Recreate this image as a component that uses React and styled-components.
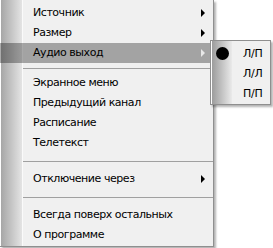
import React from "react";
import styled, { createGlobalStyle } from "styled-components";

const GlobalStyle = createGlobalStyle`
  body {
    margin: 0;
    background: #fff;
    font-family: "DejaVu Sans", Verdana, sans-serif;
  }
`;

const Page = styled.div`
  position: relative;
  width: 273px;
  height: 248px;
  overflow: hidden;
`;

const Menu = styled.div`
  width: 213px;
  padding: 3px 0 1px;
  background: linear-gradient(
    to right,
    #fdfdfd 0 1px,
    #a6a6a6 1px,
    #e4e4e4 22px,
    #fafafa 22px 23px,
    #f0f0f0 23px
  );
  border-right: 1px solid #8f8f8f;
  border-bottom: 1px solid #8f8f8f;
  box-shadow: 2px 2px 2px rgba(0, 0, 0, 0.3);
`;

const Item = styled.div`
  position: relative;
  height: 20px;
  line-height: 20px;
  padding-left: 33px;
  font-size: 11px;
  letter-spacing: -0.45px;
  color: #000;
  white-space: nowrap;
  background: ${(p) => (p.$active ? "rgba(0, 0, 0, 0.32)" : "transparent")};
`;

const Arrow = styled.span`
  position: absolute;
  right: 8px;
  top: 6px;
  width: 0;
  height: 0;
  border-left: 4px solid ${(p) => (p.$light ? "#e8e8e8" : "#000")};
  border-top: 4px solid transparent;
  border-bottom: 4px solid transparent;
`;

const Separator = styled.div`
  margin-left: 23px;
  height: ${(p) => (p.$tall ? 16 : 10)}px;
  display: flex;
  align-items: center;

  &::after {
    content: "";
    flex: 1;
    height: 1px;
    background: #a0a0a0;
  }
`;

const SubMenu = styled.div`
  position: absolute;
  left: 210px;
  top: 40px;
  width: 59px;
  padding: 2px 0 1px;
  border: 1px solid #8f8f8f;
  background: linear-gradient(
    to right,
    #fdfdfd 0 1px,
    #9c9c9c 1px,
    #eaeaea 21px,
    #f0f0f0 21px
  );
  box-shadow: 2px 2px 2px rgba(0, 0, 0, 0.3);
`;

const SubItem = styled.div`
  display: flex;
  align-items: center;
  height: 20px;
  font-size: 11px;
  color: #000;
`;

const BulletCell = styled.span`
  width: 22px;
  display: flex;
  justify-content: center;
`;

const Bullet = styled.span`
  width: 13px;
  height: 13px;
  border-radius: 50%;
  background: ${(p) => (p.$on ? "#000" : "transparent")};
`;

const Label = styled.span`
  margin-left: 10px;
  letter-spacing: -0.3px;
`;

const top = [
  { text: "Источник", sub: true },
  { text: "Размер", sub: true },
  { text: "Аудио выход", sub: true, active: true },
];

const middle = ["Экранное меню", "Предыдущий канал", "Расписание", "Телетекст"];

const audio = [
  { text: "Л/П", on: true },
  { text: "Л/Л" },
  { text: "П/П" },
];

export default function App() {
  return (
    <Page>
      <GlobalStyle />
      <Menu>
        {top.map((it) => (
          <Item key={it.text} $active={it.active}>
            {it.text}
            {it.sub && <Arrow $light={it.active} />}
          </Item>
        ))}
        <Separator />
        {middle.map((t) => (
          <Item key={t}>{t}</Item>
        ))}
        <Separator $tall />
        <Item>
          Отключение через
          <Arrow />
        </Item>
        <Separator $tall />
        <Item>Всегда поверх остальных</Item>
        <Item>О программе</Item>
      </Menu>
      <SubMenu>
        {audio.map((it) => (
          <SubItem key={it.text}>
            <BulletCell>
              <Bullet $on={it.on} />
            </BulletCell>
            <Label>{it.text}</Label>
          </SubItem>
        ))}
      </SubMenu>
    </Page>
  );
}
